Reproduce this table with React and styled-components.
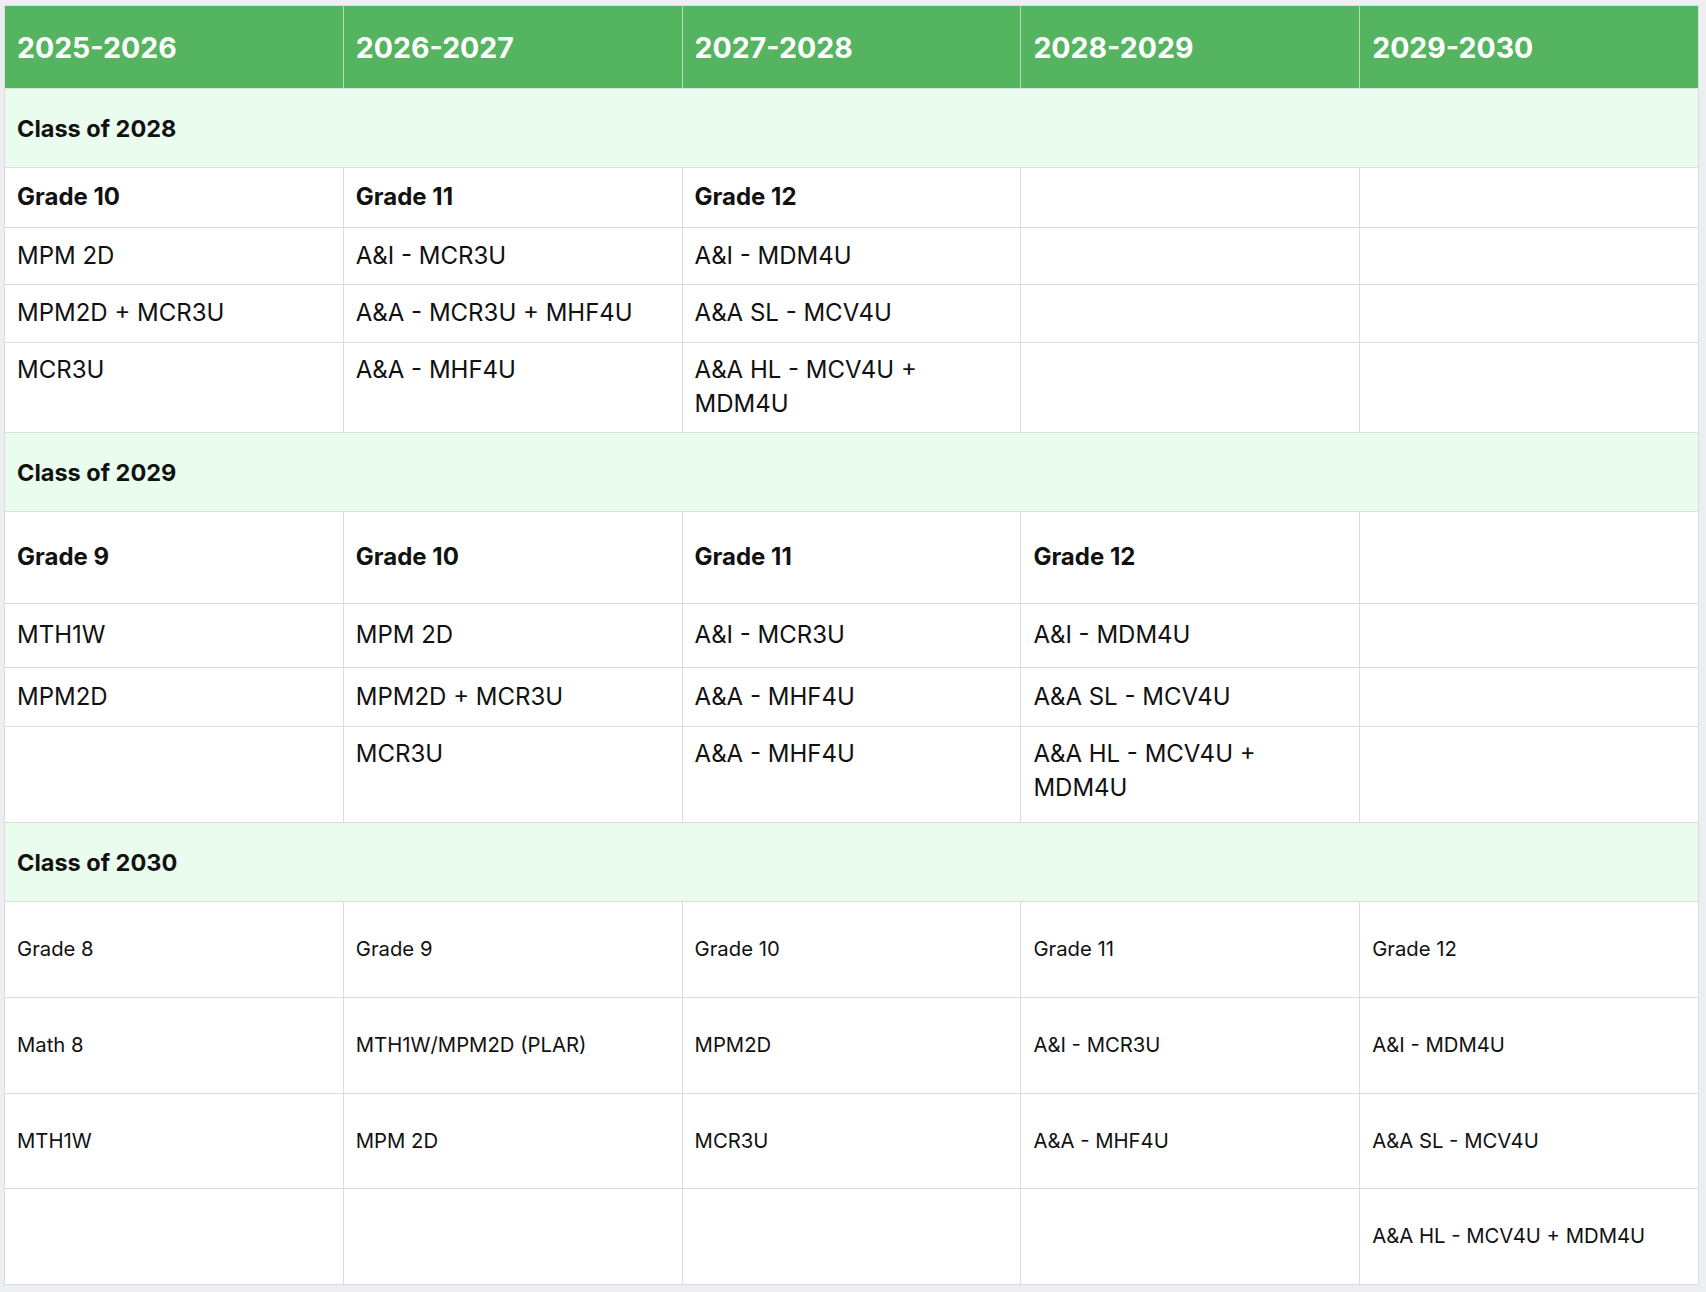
import React from 'react'
import styled, { createGlobalStyle } from 'styled-components'

const Global = createGlobalStyle`
  html, body {
    margin: 0;
    padding: 0;
    background: #eceef2;
  }
  body {
    font-family: Inter, "Liberation Sans", sans-serif;
    color: #111;
  }
`

const Page = styled.div`
  padding: 5px 7px 6px 4px;
`

const Table = styled.table`
  width: 100%;
  border-collapse: collapse;
  table-layout: fixed;
  background: #fff;
  border: 1px solid #dcdcdc;
`

const HeadCell = styled.th`
  background: #55b45f;
  color: #fff;
  font-size: 28.5px;
  font-weight: 700;
  text-align: left;
  padding: 0 12px;
  height: 82px;
  border-right: 1px solid #b3dcb7;
  border-bottom: 1px solid #d6e9d8;
  &:last-child {
    border-right: none;
  }
`

const Row = styled.tr`
  height: ${(p) => p.$h}px;
`

const ClassCell = styled.td`
  background: #e9fced;
  font-size: 23.5px;
  font-weight: 700;
  padding: 0 12px;
  border-bottom: 1px solid #dcdcdc;
`

const Cell = styled.td`
  font-size: ${(p) => (p.$small ? 20.3 : 24)}px;
  font-weight: ${(p) => (p.$bold ? 700 : 400)};
  line-height: 1.42;
  padding: 10px 22px 10px 12px;
  vertical-align: ${(p) => (p.$top ? 'top' : 'middle')};
  border: 1px solid #dcdcdc;
`

const years = ['2025-2026', '2026-2027', '2027-2028', '2028-2029', '2029-2030']

const sections = [
  {
    title: 'Class of 2028',
    rows: [
      { h: 60, bold: true, cells: ['Grade 10', 'Grade 11', 'Grade 12', '', ''] },
      { h: 57, cells: ['MPM 2D', 'A&I - MCR3U', 'A&I - MDM4U', '', ''] },
      { h: 58, cells: ['MPM2D + MCR3U', 'A&A - MCR3U + MHF4U', 'A&A SL - MCV4U', '', ''] },
      { h: 90, cells: ['MCR3U', 'A&A - MHF4U', 'A&A HL - MCV4U + MDM4U', '', ''], top: true },
    ],
  },
  {
    title: 'Class of 2029',
    rows: [
      { h: 92, bold: true, cells: ['Grade 9', 'Grade 10', 'Grade 11', 'Grade 12', ''] },
      { h: 64, cells: ['MTH1W', 'MPM 2D', 'A&I - MCR3U', 'A&I - MDM4U', ''] },
      { h: 59, cells: ['MPM2D', 'MPM2D + MCR3U', 'A&A - MHF4U', 'A&A SL - MCV4U', ''] },
      { h: 96, cells: ['', 'MCR3U', 'A&A - MHF4U', 'A&A HL - MCV4U + MDM4U', ''], top: true },
    ],
  },
  {
    title: 'Class of 2030',
    small: true,
    rows: [
      { h: 96, cells: ['Grade 8', 'Grade 9', 'Grade 10', 'Grade 11', 'Grade 12'] },
      { h: 96, cells: ['Math 8', 'MTH1W/MPM2D (PLAR)', 'MPM2D', 'A&I - MCR3U', 'A&I - MDM4U'] },
      { h: 95, cells: ['MTH1W', 'MPM 2D', 'MCR3U', 'A&A - MHF4U', 'A&A SL - MCV4U'] },
      { h: 96, cells: ['', '', '', '', 'A&A HL - MCV4U + MDM4U'] },
    ],
  },
]

export default function App() {
  return (
    <Page>
      <Global />
      <Table>
        <thead>
          <tr>
            {years.map((y) => (
              <HeadCell key={y}>{y}</HeadCell>
            ))}
          </tr>
        </thead>
        <tbody>
          {sections.map((s) => (
            <React.Fragment key={s.title}>
              <Row $h={79}>
                <ClassCell colSpan={5}>{s.title}</ClassCell>
              </Row>
              {s.rows.map((r, i) => (
                <Row key={i} $h={r.h}>
                  {r.cells.map((c, j) => (
                    <Cell key={j} $bold={r.bold} $small={s.small} $top={r.top}>
                      {c}
                    </Cell>
                  ))}
                </Row>
              ))}
            </React.Fragment>
          ))}
        </tbody>
      </Table>
    </Page>
  )
}
